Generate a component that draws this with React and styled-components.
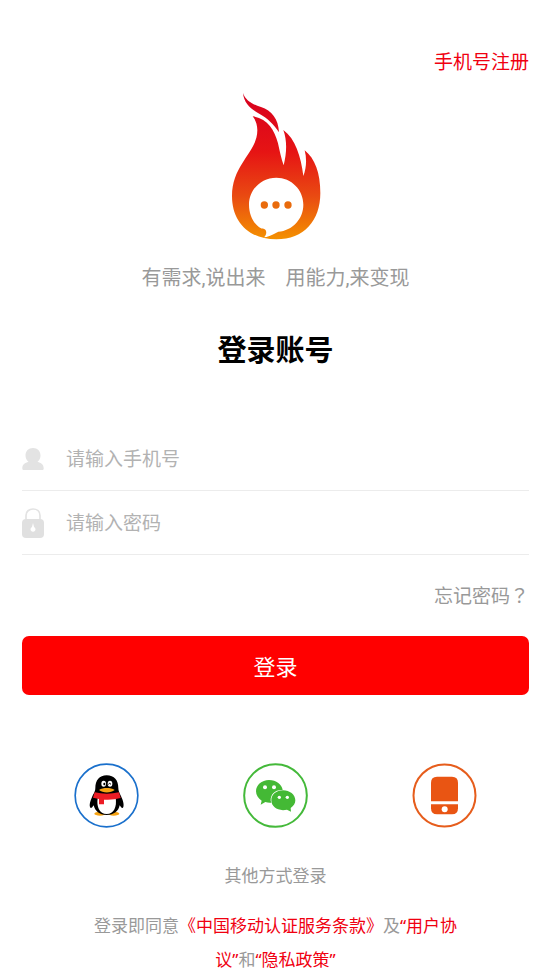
import React, { useState } from 'react';
import styled, { createGlobalStyle } from 'styled-components';

const GlobalStyle = createGlobalStyle`
  * {
    box-sizing: border-box;
  }
  body {
    margin: 0;
    background: #fff;
    color: #999;
    font-family: 'Noto Sans', 'Noto Sans CJK SC', sans-serif;
    font-size: 19px;
    line-height: 30px;
  }
`;

const Page = styled.main`
  display: flex;
  flex-direction: column;
  padding: 47px 21px 3px 22px;
`;

const TextLink = styled.a`
  color: ${props => (props.$muted ? '#999' : '#f00010')};
  text-decoration: none;
`;

//Full-width punctuation sits in the middle of its box in this family
const CenteredMark = styled.span`
  font-family: 'Noto Sans CJK TC', sans-serif;
`;

const Header = styled.header`
  display: flex;
  justify-content: flex-end;
`;

const Brand = styled.div`
  display: flex;
  flex-direction: column;
  align-items: center;
  gap: 23px;
  margin-top: 16px;
`;

const Tagline = styled.p`
  margin: 0;
  font-family: Roboto, 'Noto Sans CJK SC', sans-serif;
  font-size: 20px;
  white-space: pre;
`;

const Title = styled.h1`
  margin: 37px 0 57px;
  color: #000;
  font-size: 29px;
  font-weight: 700;
  line-height: 40px;
  text-align: center;
`;

const Form = styled.form`
  display: flex;
  flex-direction: column;
`;

const Field = styled.label`
  display: flex;
  align-items: center;
  gap: 22px;
  height: 64px;
  border-bottom: 1px solid #ececec;
`;

const Input = styled.input`
  flex: 1;
  min-width: 0;
  padding: 0;
  border: 0;
  outline: 0;
  background: none;
  color: #333;
  font: inherit;

  &::placeholder {
    color: #b2b2b2;
    opacity: 1;
  }
`;

const Forgot = styled.div`
  display: flex;
  justify-content: flex-end;
  margin: 25px 0;
`;

const SubmitButton = styled.button`
  height: 59px;
  padding: 0 0 2px;
  border: 0;
  border-radius: 7px;
  background: #f00;
  color: #fff;
  font-family: inherit;
  font-size: 22px;
  cursor: pointer;
`;

const Socials = styled.div`
  display: grid;
  grid-template-columns: repeat(3, 1fr);
  justify-items: center;
  margin: 68px 0 33px;
`;

const SocialButton = styled.button`
  display: flex;
  padding: 0;
  border: 0;
  background: none;
  cursor: pointer;
`;

const OtherWays = styled.p`
  margin: 0 0 18px;
  font-size: 17px;
  text-align: center;
`;

const Agreement = styled.p`
  margin: 0;
  padding: 0 66px;
  font-size: 17px;
  line-height: 34px;
  text-align: center;
`;

const FlameLogo = () => (
  <svg width="90" height="147" viewBox="48 24 270 441" aria-hidden="true">
    <defs>
      <linearGradient id="flame" x1="0" y1="24" x2="0" y2="465" gradientUnits="userSpaceOnUse">
        <stop offset="0" stopColor="#d7001f" />
        <stop offset="0.4" stopColor="#e61414" />
        <stop offset="0.7" stopColor="#e94a12" />
        <stop offset="1" stopColor="#f49200" />
      </linearGradient>
    </defs>
    <path
      fill="url(#flame)"
      d="M84 24C92 47 111 57 138 66C170 77 190 101 192 142C175 116 158 101 134 87C107 72 87 55 84 24Z"
    />
    <path
      fill="url(#flame)"
      d="M113 94C158 101 178 134 189 175C194 198 199 222 206 241C215 204 217 168 205 135C241 161 258 215 265 273C274 250 276 222 269 196C300 221 316 264 316 324C316 407 267 463 184 463C102 463 51 411 51 333C51 238 127 202 127 136C127 119 122 105 113 94Z"
    />
    <path
      fill="#fff"
      d="M184 278C229 278 265 314 265 359C265 402 232 437 190 440C178 445 169 454 147 457C154 451 156 440 151 434C147 430 142 433 135 428C114 414 102 388 102 359C102 314 139 278 184 278Z"
    />
    <circle cx="148" cy="360" r="11" fill="#e96b0c" />
    <circle cx="183" cy="360" r="11" fill="#e96b0c" />
    <circle cx="219" cy="360" r="11" fill="#e96b0c" />
  </svg>
);

const UserIcon = () => (
  <svg width="22" height="22" viewBox="0 0 22 22" fill="#e3e3e3" aria-hidden="true">
    <path d="M11 0C15.500 0 18.500 3 18.500 7.500C18.500 10 17.500 12 15.500 13.800C19 14.800 21.700 16.500 21.700 20.500C21.700 21.600 21 22 20 22H2C1 22 .300 21.600 .300 20.500C.300 16.500 3 14.800 6.500 13.800C4.500 12 3.500 10 3.500 7.500C3.500 3 6.500 0 11 0Z" />
  </svg>
);

const LockIcon = () => (
  <svg width="22" height="30" viewBox="0 0 22 30" aria-hidden="true">
    <path d="M4 13V7.500C4 3.500 7 1 11 1S18 3.500 18 7.500V13" fill="none" stroke="#e3e3e3" strokeWidth="1.700" />
    <rect y="11" width="22" height="19" rx="4" fill="#e0e0e0" />
    <path d="M11 15L12 19A2.500 2.500 0 1 1 10 19Z" fill="#fff" />
  </svg>
);

const QQIcon = () => (
  <svg width="65" height="65" viewBox="41 38 195 195" aria-hidden="true">
    <circle cx="138.500" cy="135.500" r="94" fill="#fff" stroke="#1a70cc" strokeWidth="5" />
    <ellipse cx="119" cy="190" rx="17" ry="6" fill="#f6a313" />
    <ellipse cx="160" cy="190" rx="17" ry="6" fill="#f6a313" />
    <path
      fill="#000"
      d="M139 75C162 75 174 90 174 113C174 121 177 127 180 133C187 147 192 160 189 170C187 175 183 173 178 165C175 182 161 194 139 194C117 194 104 182 100 165C95 173 91 175 89 170C86 160 92 147 98 133C102 127 105 121 105 113C105 90 117 75 139 75Z"
    />
    <path fill="#fff" d="M112 143H166C170 169 161 191 139 191C117 191 108 169 112 143Z" />
    <ellipse cx="130" cy="100" rx="7" ry="9" fill="#fff" />
    <ellipse cx="149" cy="100" rx="7" ry="9" fill="#fff" />
    <ellipse cx="132" cy="101" rx="3" ry="4" fill="#000" />
    <path d="M144 102Q148 96 152 102" fill="none" stroke="#000" strokeWidth="3" />
    <path fill="#f6a313" d="M116 119C128 111 151 111 163 119C152 129 127 129 116 119Z" />
    <path fill="#ed1c24" d="M103 126Q139 134 176 126L181 143Q158 150 131 148V162H116V146L98 142Z" />
  </svg>
);

const WechatIcon = () => (
  <svg width="65" height="65" viewBox="38 38 195 195" aria-hidden="true">
    <circle cx="135.500" cy="135.500" r="94" fill="#fff" stroke="#44b93a" strokeWidth="6" />
    <path
      fill="#44b935"
      d="M116 89C138 89 155 103 157 119C136 117 120 131 121 151L123 157C117 158 111 157 105 155L91 163L94 151C84 144 77 135 77 123C77 104 94 89 116 89Z"
    />
    <path
      fill="#44b935"
      d="M158 120C178 120 195 133 195 150C195 160 190 167 181 173L182 184L170 178C144 184 123 170 123 150C123 133 138 120 158 120Z"
    />
    <circle cx="104" cy="111" r="6" fill="#fff" />
    <circle cx="131" cy="111" r="6" fill="#fff" />
    <circle cx="147" cy="141" r="5" fill="#fff" />
    <circle cx="171" cy="141" r="5" fill="#fff" />
  </svg>
);

const PhoneIcon = () => (
  <svg width="65" height="65" viewBox="38 38 195 195" aria-hidden="true">
    <circle cx="135.500" cy="135.500" r="93" fill="#fff" stroke="#e65d1c" strokeWidth="6" />
    <path fill="#e95513" d="M95 153V97Q95 79 113 79H158Q176 79 176 97V153Z" />
    <path fill="#e95513" d="M95 162H176V174Q176 192 158 192H113Q95 192 95 174Z" />
    <circle cx="136" cy="177" r="9" fill="#fff" />
  </svg>
);

const socials = [
  { name: 'QQ', Icon: QQIcon },
  { name: '微信', Icon: WechatIcon },
  { name: '手机', Icon: PhoneIcon },
];

const App = () => {
  const [phone, setPhone] = useState('');
  const [password, setPassword] = useState('');

  return (
    <Page lang="zh-CN">
      <GlobalStyle />
      <Header>
        <TextLink href="#register">手机号注册</TextLink>
      </Header>
      <Brand>
        <FlameLogo />
        <Tagline>有需求,说出来{'\u3000'}用能力,来变现</Tagline>
      </Brand>
      <Title>登录账号</Title>
      <Form onSubmit={e => e.preventDefault()}>
        <Field>
          <UserIcon />
          <Input
            type="tel"
            aria-label="手机号"
            placeholder="请输入手机号"
            value={phone}
            onChange={e => setPhone(e.target.value)}
          />
        </Field>
        <Field>
          <LockIcon />
          <Input
            type="password"
            aria-label="密码"
            placeholder="请输入密码"
            value={password}
            onChange={e => setPassword(e.target.value)}
          />
        </Field>
        <Forgot>
          <TextLink $muted href="#forgot">
            忘记密码<CenteredMark lang="zh-TW">？</CenteredMark>
          </TextLink>
        </Forgot>
        <SubmitButton type="submit">登录</SubmitButton>
      </Form>
      <Socials>
        {socials.map(({ name, Icon }) => (
          <SocialButton key={name} type="button" aria-label={name}>
            <Icon />
          </SocialButton>
        ))}
      </Socials>
      <OtherWays>其他方式登录</OtherWays>
      <Agreement>
        登录即同意<TextLink href="#terms">《中国移动认证服务条款》</TextLink>及
        <TextLink href="#agreement">“用户协议”</TextLink>和
        <TextLink href="#privacy">“隐私政策”</TextLink>
      </Agreement>
    </Page>
  );
};

export default App;
